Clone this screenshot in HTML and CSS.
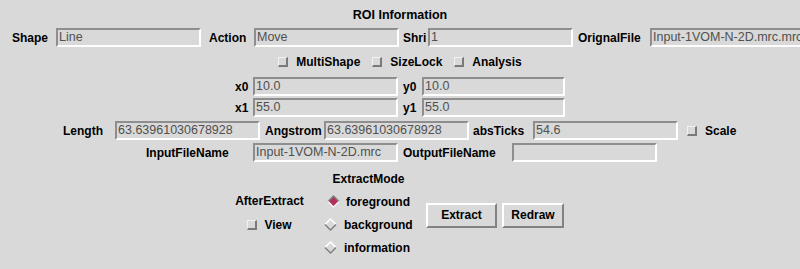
FILE: index.html
```html
<!DOCTYPE html>
<html>
<head>
    <title>ROI Information</title>
    <link rel="stylesheet" href="styles.css">
</head>
<body>
    <div class="panel">
        <div class="title">ROI Information</div>

        <div class="row row-top">
            <span class="lbl">Shape</span><div class="entry">Line</div>
            <span class="lbl">Action</span><div class="entry">Move</div>
            <span class="lbl">Shri</span><div class="entry">1</div>
            <span class="lbl">OrignalFile</span><div class="entry long">Input-1VOM-N-2D.mrc.mrc</div>
        </div>

        <div class="checks">
            <label class="check"><span class="box"></span>MultiShape</label>
            <label class="check"><span class="box"></span>SizeLock</label>
            <label class="check"><span class="box"></span>Analysis</label>
        </div>

        <div class="row row-coords">
            <span class="lbl">x0</span><div class="entry">10.0</div>
            <span class="lbl">y0</span><div class="entry short">10.0</div>
        </div>
        <div class="row row-coords">
            <span class="lbl">x1</span><div class="entry">55.0</div>
            <span class="lbl">y1</span><div class="entry short">55.0</div>
        </div>

        <div class="row row-length">
            <span class="lbl">Length</span><div class="entry">63.63961030678928</div>
            <span class="lbl">Angstrom</span><div class="entry">63.63961030678928</div>
            <span class="lbl">absTicks</span><div class="entry">54.6</div>
            <label class="check"><span class="box"></span>Scale</label>
        </div>

        <div class="row row-files">
            <span class="lbl">InputFileName</span><div class="entry">Input-1VOM-N-2D.mrc</div>
            <span class="lbl">OutputFileName</span><div class="entry"></div>
        </div>

        <div class="extract">
            <div class="after">
                <span class="lbl">AfterExtract</span>
                <label class="check view"><span class="box"></span>View</label>
            </div>

            <div class="mode">
                <span class="lbl mode-title">ExtractMode</span>
                <label class="radio selected">
                    <svg width="13" height="13" viewBox="0 0 13 13">
                        <polygon points="6.5,1 12,6.5 6.5,12 1,6.5" fill="#b03060"/>
                        <polyline points="1,6.5 6.5,1 12,6.5" fill="none" stroke="#828282" stroke-width="1.5"/>
                        <polyline points="1,6.5 6.5,12 12,6.5" fill="none" stroke="#f4f4f4" stroke-width="1.5"/>
                    </svg>
                    foreground
                </label>
                <label class="radio">
                    <svg width="13" height="13" viewBox="0 0 13 13">
                        <polygon points="6.5,1 12,6.5 6.5,12 1,6.5" fill="#d9d9d9"/>
                        <polyline points="1,6.5 6.5,1 12,6.5" fill="none" stroke="#ffffff" stroke-width="1.5"/>
                        <polyline points="1,6.5 6.5,12 12,6.5" fill="none" stroke="#828282" stroke-width="1.5"/>
                    </svg>
                    background
                </label>
                <label class="radio">
                    <svg width="13" height="13" viewBox="0 0 13 13">
                        <polygon points="6.5,1 12,6.5 6.5,12 1,6.5" fill="#d9d9d9"/>
                        <polyline points="1,6.5 6.5,1 12,6.5" fill="none" stroke="#ffffff" stroke-width="1.5"/>
                        <polyline points="1,6.5 6.5,12 12,6.5" fill="none" stroke="#828282" stroke-width="1.5"/>
                    </svg>
                    information
                </label>
            </div>

            <div class="buttons">
                <button class="btn extract-btn">Extract</button>
                <button class="btn redraw-btn">Redraw</button>
            </div>
        </div>
    </div>
</body>
</html>
```

FILE: styles.css
```css
body {
    margin: 0;
    background-color: #d9d9d9; /* Tk default grey */
    font-family: "Liberation Sans", Arial, sans-serif;
    font-size: 12px;
    font-weight: bold;
    color: #000;
}

.panel {
    width: 800px;
    height: 269px;
    overflow: hidden;
}

.title {
    padding-top: 3px;
    height: 24px;
    line-height: 24px;
    text-align: center;
    font-size: 12.5px;
}

.lbl {
    white-space: nowrap;
}

/* grid rows, columns measured from label start to next label start */
.row {
    display: grid;
    align-items: center;
    height: 21px;
}

.row-top {
    padding-left: 12px;
    grid-template-columns: 44px 153px 45px 149px 25px 150px 72px 150px;
}

.row-coords {
    padding-left: 235px;
    grid-template-columns: 18px 150px 19px 145px;
}

.row-length {
    margin-top: 2px;
    padding-left: 63px;
    grid-template-columns: 52px 150px 59px 149px 60px 154px auto;
}

.row-files {
    margin-top: 1px;
    padding-left: 146px;
    grid-template-columns: 107px 150px 109px 145px;
}

.entry {
    box-sizing: border-box;
    width: 145px;
    height: 19px;
    border: 2px solid;
    border-color: #8e8e8e #ffffff #ffffff #8e8e8e; /* sunken */
    padding: 0 1px;
    font-weight: normal;
    font-size: 12.5px;
    line-height: 15px;
    color: #505050;
    white-space: nowrap;
    overflow: hidden;
}

.entry.long {
    width: 152px;
}

.entry.short {
    width: 143px;
}

.checks {
    display: flex;
    justify-content: center;
    align-items: center;
    gap: 12px;
    height: 28px;
}

.check {
    display: inline-flex;
    align-items: center;
    gap: 8px;
    white-space: nowrap;
}

.box {
    box-sizing: border-box;
    width: 10px;
    height: 10px;
    border-style: solid;
    border-width: 1px 2px 2px 1px;
    border-color: #f2f2f2 #7a7a7a #7a7a7a #f2f2f2; /* raised */
}

.row-length .check {
    margin-left: 0;
}

.extract {
    display: flex;
    align-items: center;
    padding: 8px 0 0 233px;
}

.after {
    display: flex;
    flex-direction: column;
    align-items: center;
    gap: 4px;
    width: 73px;
}

.after .lbl {
    line-height: 16px;
}

.view {
    height: 24px;
    gap: 7px;
}

.mode {
    display: flex;
    flex-direction: column;
    width: 89px;
    margin-left: 18px;
}

.mode-title {
    align-self: center;
    line-height: 16px;
    height: 16px;
    margin-bottom: 3px;
}

.radio {
    display: flex;
    align-items: center;
    gap: 7px;
    height: 23px;
    white-space: nowrap;
}

.radio svg {
    display: block;
}

.radio.selected {
    margin-left: 3px;
    gap: 6px;
}

.buttons {
    display: flex;
    gap: 5px;
    margin-left: 13px;
}

.btn {
    box-sizing: border-box;
    height: 25px;
    padding: 0;
    border: 2px solid;
    border-color: #ffffff #828282 #828282 #ffffff; /* raised */
    background-color: #d9d9d9;
    font-family: "Liberation Sans", Arial, sans-serif;
    font-size: 12px;
    font-weight: bold;
    color: #000;
}

.extract-btn {
    width: 71px;
}

.redraw-btn {
    width: 62px;
}
```
